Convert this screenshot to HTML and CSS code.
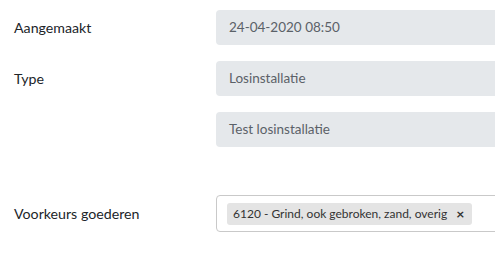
FILE: index.html
```html
<!DOCTYPE html>
<html lang="nl">
  <head>
    <meta charset="UTF-8" />
    <meta name="viewport" content="width=device-width, initial-scale=1.0" />
    <title>Losinstallatie</title>
    <link rel="stylesheet" href="styles.css">
  </head>
  <body>
    <form class="form">
      <div class="row">
        <label class="label">Aangemaakt</label>
        <div class="control">24-04-2020 08:50</div>
      </div>
      <div class="row">
        <label class="label">Type</label>
        <div class="control">Losinstallatie</div>
      </div>
      <div class="row">
        <label class="label"></label>
        <div class="control">Test losinstallatie</div>
      </div>
      <div class="row row-select">
        <label class="label">Voorkeurs goederen</label>
        <div class="select">
          <span class="tag">6120 - Grind, ook gebroken, zand, overig <span class="tag-remove">&times;</span></span>
        </div>
      </div>
    </form>
  </body>
</html>
```

FILE: styles.css
```css
* {
  box-sizing: border-box;
  margin: 0;
  padding: 0;
}

body {
  font-family: Lato, "Noto Sans", sans-serif;
  font-size: 13.5px;
  color: #212529;
  background: #fff;
  overflow: hidden;
}

.form {
  padding: 10px 0 0 14px;
  width: 620px;
}

.row {
  display: grid;
  grid-template-columns: 202px 1fr;
  align-items: center;
  margin-bottom: 16px;
}

.row-select {
  margin-top: 48px;
}

.label {
  font-size: 14.2px;
  color: #212529;
}

.control {
  height: 35px;
  line-height: 35px;
  padding: 0 13px;
  background-color: #e5e8eb;
  border-radius: 4px;
  color: #5b6168;
}

.select {
  height: 37px;
  border: 1px solid #c9c9c9;
  border-radius: 4px;
  padding: 7px 10px;
  display: flex;
  align-items: center;
}

.tag {
  display: inline-flex;
  align-items: center;
  height: 22px;
  padding: 0 8px 0 6px;
  background-color: #e4e4e4;
  border-radius: 3px;
  font-size: 12px;
  color: #333;
}

.tag-remove {
  margin-left: 9px;
  font-weight: bold;
  font-size: 14px;
  color: #333;
}
```
